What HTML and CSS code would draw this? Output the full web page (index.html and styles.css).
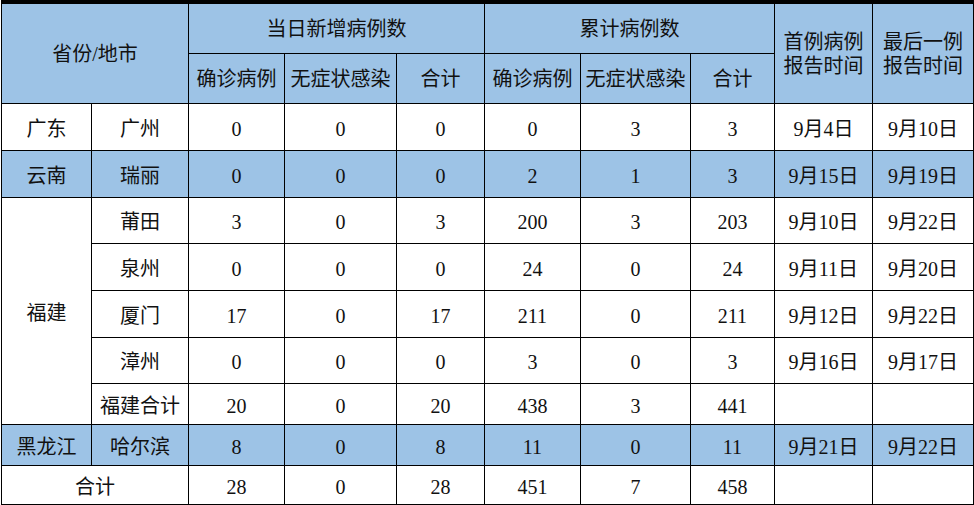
FILE: index.html
```html
<!DOCTYPE html>
<html lang="zh-CN">
<head>
<meta charset="utf-8">
<title>病例统计</title>
<link rel="stylesheet" href="styles.css">
</head>
<body>
<div class="sheet">
  <div class="c hd region">省份/地市</div>
  <div class="c hd daily">当日新增病例数</div>
  <div class="c hd total">累计病例数</div>
  <div class="c hd first two">首例病例<br>报告时间</div>
  <div class="c hd last two">最后一例<br>报告时间</div>
  <div class="c hd">确诊病例</div>
  <div class="c hd">无症状感染</div>
  <div class="c hd">合计</div>
  <div class="c hd">确诊病例</div>
  <div class="c hd">无症状感染</div>
  <div class="c hd">合计</div>

  <div class="c">广东</div><div class="c">广州</div>
  <div class="c">0</div><div class="c">0</div><div class="c">0</div>
  <div class="c">0</div><div class="c">3</div><div class="c">3</div>
  <div class="c">9月4日</div><div class="c">9月10日</div>

  <div class="c hl">云南</div><div class="c hl">瑞丽</div>
  <div class="c hl">0</div><div class="c hl">0</div><div class="c hl">0</div>
  <div class="c hl">2</div><div class="c hl">1</div><div class="c hl">3</div>
  <div class="c hl">9月15日</div><div class="c hl">9月19日</div>

  <div class="c fujian">福建</div>
  <div class="c">莆田</div>
  <div class="c">3</div><div class="c">0</div><div class="c">3</div>
  <div class="c">200</div><div class="c">3</div><div class="c">203</div>
  <div class="c">9月10日</div><div class="c">9月22日</div>

  <div class="c">泉州</div>
  <div class="c">0</div><div class="c">0</div><div class="c">0</div>
  <div class="c">24</div><div class="c">0</div><div class="c">24</div>
  <div class="c">9月11日</div><div class="c">9月20日</div>

  <div class="c">厦门</div>
  <div class="c">17</div><div class="c">0</div><div class="c">17</div>
  <div class="c">211</div><div class="c">0</div><div class="c">211</div>
  <div class="c">9月12日</div><div class="c">9月22日</div>

  <div class="c">漳州</div>
  <div class="c">0</div><div class="c">0</div><div class="c">0</div>
  <div class="c">3</div><div class="c">0</div><div class="c">3</div>
  <div class="c">9月16日</div><div class="c">9月17日</div>

  <div class="c">福建合计</div>
  <div class="c">20</div><div class="c">0</div><div class="c">20</div>
  <div class="c">438</div><div class="c">3</div><div class="c">441</div>
  <div class="c"></div><div class="c"></div>

  <div class="c hl">黑龙江</div><div class="c hl">哈尔滨</div>
  <div class="c hl">8</div><div class="c hl">0</div><div class="c hl">8</div>
  <div class="c hl">11</div><div class="c hl">0</div><div class="c hl">11</div>
  <div class="c hl">9月21日</div><div class="c hl">9月22日</div>

  <div class="c sum">合计</div>
  <div class="c">28</div><div class="c">0</div><div class="c">28</div>
  <div class="c">451</div><div class="c">7</div><div class="c">458</div>
  <div class="c"></div><div class="c"></div>
</div>
</body>
</html>
```

FILE: styles.css
```css
html, body {
  margin: 0;
  padding: 0;
  background: #ffffff;
}

body {
  padding-left: 1px;
}

.sheet {
  display: grid;
  width: 973px;
  box-sizing: border-box;
  padding: 4px 1px 1px 1px;
  gap: 1px;
  background: #000000;
  grid-template-columns: 89px 96px 95px 111px 87px 95px 109px 83px 97px 100px;
  grid-template-rows: 49px 49px 46px 46px 45px 46px 46px 45px 40px 40px 38px;
  font-family: "Liberation Serif", "Noto Sans CJK SC", serif;
  font-size: 20px;
  color: #111111;
}

.c {
  background: #ffffff;
  display: flex;
  align-items: center;
  justify-content: center;
  text-align: center;
  line-height: 24px;
  white-space: nowrap;
  padding-top: 3px;
}

.hd {
  padding-top: 0;
}

.hd,
.hl {
  background: #9dc3e6;
}

.region {
  grid-column: 1 / 3;
  grid-row: 1 / 3;
}

.daily {
  grid-column: 3 / 6;
}

.total {
  grid-column: 6 / 9;
}

.first {
  grid-column: 9;
  grid-row: 1 / 3;
}

.last {
  grid-column: 10;
  grid-row: 1 / 3;
}

.fujian {
  grid-column: 1;
  grid-row: 5 / 10;
}

.sum {
  grid-column: 1 / 3;
}
```
